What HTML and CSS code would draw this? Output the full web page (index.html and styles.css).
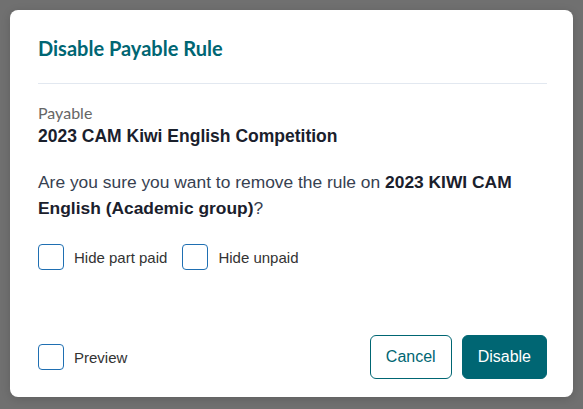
FILE: index.html
```html
<!DOCTYPE html>
<html lang="en">
<head>
    <meta charset="UTF-8">
    <meta name="viewport" content="width=device-width, initial-scale=1.0">
    <title>Disable Payable Rule</title>
    <link rel="stylesheet" href="styles.css">
</head>
<body>

    <div class="modal">
        <div class="modal-header">
            <h2>Disable Payable Rule</h2>
        </div>

        <div class="modal-body">
            <div class="field-label">Payable</div>
            <div class="field-value">2023 CAM Kiwi English Competition</div>

            <p class="question">Are you sure you want to remove the rule on <strong>2023 KIWI CAM English (Academic group)</strong>?</p>

            <div class="options">
                <label class="check"><span class="box"></span>Hide part paid</label>
                <label class="check"><span class="box"></span>Hide unpaid</label>
            </div>
        </div>

        <div class="modal-footer">
            <label class="check"><span class="box"></span>Preview</label>
            <div class="actions">
                <button class="btn btn-outline">Cancel</button>
                <button class="btn btn-primary">Disable</button>
            </div>
        </div>
    </div>

</body>
</html>
```

FILE: styles.css
```css
body {
    margin: 0;
    background-color: #707070;
    font-family: "Liberation Sans", Arial, sans-serif;
}

.modal {
    margin: 10px;
    width: 563px;
    height: 387px;
    box-sizing: border-box;
    padding: 0 26px 18px 28px;
    background-color: white;
    border-radius: 8px;
    box-shadow: 0px 2px 10px rgba(0, 0, 0, 0.15);
    display: flex;
    flex-direction: column;
}

.modal-header {
    padding: 25px 0 22px;
    border-bottom: 1px solid #e2e8f0;
}

h2 {
    margin: 0;
    font-family: Lato, sans-serif;
    font-size: 20px;
    font-weight: 700;
    line-height: 26px;
    color: #006673;
}

.modal-body {
    flex: 1;
    padding-top: 19px;
}

.field-label {
    font-family: Lato, sans-serif;
    font-size: 16px;
    line-height: 20px;
    color: #666;
}

.field-value {
    margin-top: 1px;
    font-size: 17.5px;
    font-weight: bold;
    line-height: 24px;
    color: #1a202c;
}

.question {
    margin: 21px 0 0;
    font-size: 17.4px;
    line-height: 26px;
    color: #374151;
}

.question strong {
    color: #1a202c;
}

.options {
    display: flex;
    gap: 15px;
    margin-top: 23px;
}

.check {
    display: flex;
    align-items: center;
    gap: 10px;
    font-size: 15px;
    color: #333;
}

.box {
    width: 24px;
    height: 24px;
    border: 1px solid #1f6fb2;
    border-radius: 4px;
}

.modal-footer {
    display: flex;
    justify-content: space-between;
    align-items: center;
}

.actions {
    display: flex;
    gap: 10px;
}

.btn {
    height: 44px;
    padding: 0 15px;
    font-family: "Liberation Sans", Arial, sans-serif;
    font-size: 16px;
    border-radius: 6px;
    cursor: pointer;
}

.btn-outline {
    background-color: white;
    color: #006673;
    border: 1px solid #006673;
}

.btn-primary {
    background-color: #006673;
    color: white;
    border: 1px solid #006673;
}
```
